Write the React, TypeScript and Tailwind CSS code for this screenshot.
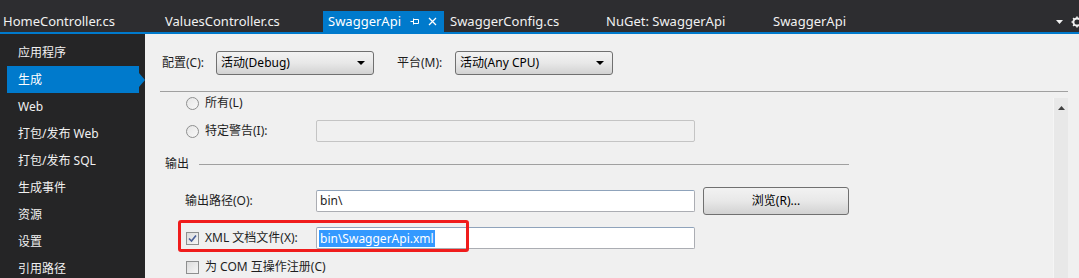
import React from 'react';

const font = { fontFamily: '"Noto Sans", "Noto Sans CJK SC", sans-serif' };

const tabs = [
  { label: 'HomeController.cs', cls: 'w-[160px] pl-[3px]' },
  { label: 'ValuesController.cs', cls: 'w-[163px] pl-[5px]' },
  { label: 'SwaggerApi', cls: 'w-[121px] pl-[5px]', active: true },
  { label: 'SwaggerConfig.cs', cls: 'w-[157px] pl-[6px]' },
  { label: 'NuGet: SwaggerApi', cls: 'w-[167px] pl-[5px]' },
  { label: 'SwaggerApi', cls: 'w-[160px] pl-[5px]' },
];

const navItems = ['应用程序', '生成', 'Web', '打包/发布 Web', '打包/发布 SQL', '生成事件', '资源', '设置', '引用路径'];

const Radio = () => (
  <span className="w-[13px] h-[13px] rounded-full border border-[#8e8f8f] bg-gradient-to-br from-[#e6e6e6] to-[#f8f8f8] shrink-0" />
);

const Checkbox = ({ checked = false }: { checked?: boolean }) => (
  <span className="w-[13px] h-[13px] border border-[#8e8f8f] bg-gradient-to-br from-[#dcdcdc] to-[#f6f6f6] shrink-0 flex items-center justify-center">
    {checked && (
      <svg width="9" height="9" viewBox="0 0 9 9">
        <path d="M1 4.5 L3.5 7 L8 1.5" fill="none" stroke="#4a5f97" strokeWidth="1.6" />
      </svg>
    )}
  </span>
);

const Combo = ({ text }: { text: string }) => (
  <div className="w-[158px] h-[24px] border border-[#707070] rounded-[3px] bg-gradient-to-b from-[#f2f2f2] via-[#e8e8e8] to-[#d2d2d2] flex items-center pl-[4px] pr-[8px] text-[12px] text-black">
    <span className="flex-1">{text}</span>
    <svg width="8" height="4" viewBox="0 0 8 4">
      <path d="M0 0 H8 L4 4 Z" fill="#000" />
    </svg>
  </div>
);

export default function App() {
  return (
    <div className="w-[1079px] h-[278px] overflow-hidden flex flex-col bg-[#f0f0f0]" style={font}>
      {/* document tab well */}
      <div className="h-[34px] shrink-0 bg-[#2d2d30] border-b-2 border-[#007acc] flex items-end text-[13px] text-[#f1f1f1]">
        {tabs.map((t, i) => (
          <div
            key={i}
            className={`${t.cls} h-[21px] flex items-center shrink-0 ${t.active ? 'bg-[#007acc] text-white' : ''}`}
          >
            <span className="leading-none">{t.label}</span>
            {t.active && (
              <div className="ml-auto mr-[7px] flex items-center gap-[9px]">
                <svg width="9" height="7" viewBox="0 0 9 7">
                  <path d="M0.5 3.5 H3.5 M3.5 0.5 V6.5 M3.5 1.5 H8.5 V5.5 H3.5" fill="none" stroke="#fff" strokeWidth="1" />
                </svg>
                <svg width="9" height="9" viewBox="0 0 9 9">
                  <path d="M1 1 L8 8 M8 1 L1 8" stroke="#fff" strokeWidth="1.3" />
                </svg>
              </div>
            )}
          </div>
        ))}
        <div className="flex-1" />
        <div className="h-[21px] flex items-center gap-[8px] mr-[-4px]">
          <svg width="7" height="4" viewBox="0 0 7 4">
            <path d="M0 0 H7 L3.5 4 Z" fill="#f1f1f1" />
          </svg>
          <svg width="12" height="12" viewBox="0 0 12 12">
            <circle cx="6" cy="6" r="3.6" fill="none" stroke="#f1f1f1" strokeWidth="2" />
            <path d="M6 0.5 V2.5 M6 9.5 V11.5 M0.5 6 H2.5 M9.5 6 H11.5 M2.1 2.1 L3.5 3.5 M8.5 8.5 L9.9 9.9 M9.9 2.1 L8.5 3.5 M3.5 8.5 L2.1 9.9" stroke="#f1f1f1" strokeWidth="1.6" />
          </svg>
        </div>
      </div>

      <div className="flex-1 flex min-h-0">
        {/* property page nav */}
        <div className="w-[145px] shrink-0 bg-[#252526] pt-[5px] text-[12px] text-[#f1f1f1]">
          {navItems.map((n) => {
            const active = n === '生成';
            return (
              <div key={n} className="h-[27px] flex items-center">
                <div className={`ml-[7px] w-[132px] h-[27px] pl-[11px] flex items-center ${active ? 'bg-[#007acc] text-white' : ''}`}>
                  <span className="leading-none">{n}</span>
                </div>
                {active && (
                  <svg width="6" height="14" viewBox="0 0 6 14">
                    <path d="M0 0 L6 7 L0 14 Z" fill="#007acc" />
                  </svg>
                )}
              </div>
            );
          })}
        </div>

        {/* property page body */}
        <div className="flex-1 flex flex-col text-[12px] text-[#1e1e1e]">
          <div className="h-[57px] shrink-0 flex items-start pt-[17px] pl-[17px]">
            <div className="flex items-center">
              <span className="leading-none w-[54px]">配置(C):</span>
              <Combo text="活动(Debug)" />
            </div>
            <div className="flex items-center ml-[23px]">
              <span className="leading-none w-[58px]">平台(M):</span>
              <Combo text="活动(Any CPU)" />
            </div>
          </div>
          <div className="ml-[15px] mr-[11px] border-t border-[#a0a0a0]" />

          <div className="flex-1 flex pr-[11px] min-h-0">
            <div className="flex-1 flex flex-col">
              <div className="h-[22px] shrink-0 flex items-center pl-[41px] gap-[6px]">
                <Radio />
                <span className="leading-none">所有(L)</span>
              </div>
              <div className="h-[34px] shrink-0 flex items-center pl-[41px]">
                <Radio />
                <span className="leading-none ml-[6px] w-[111px]">特定警告(I):</span>
                <div className="w-[379px] h-[22px] border border-[#c4c4c4] rounded-[2px] bg-[#f0f0f0]" />
              </div>
              <div className="h-[32px] shrink-0 flex items-center pl-[20px]">
                <span className="leading-none">输出</span>
                <div className="ml-[10px] w-[650px] border-t border-[#a0a0a0]" />
              </div>
              <div className="h-[42px] shrink-0 flex items-center pl-[40px]">
                <span className="leading-none w-[131px]">输出路径(O):</span>
                <div className="w-[379px] h-[22px] border border-[#abadb3] border-t-[#8fa3bb] rounded-[2px] bg-white flex items-center pl-[3px]">
                  <span className="leading-none">bin\</span>
                </div>
                <button className="ml-[8px] w-[146px] h-[28px] border border-[#707070] rounded-[3px] bg-gradient-to-b from-[#f2f2f2] via-[#e8e8e8] to-[#d2d2d2] text-[12px] text-black">
                  浏览(R)...
                </button>
              </div>
              <div className="relative h-[32px] shrink-0 flex items-center pl-[41px]">
                <Checkbox checked />
                <span className="leading-none ml-[6px] w-[111px]">XML 文档文件(X):</span>
                <div className="w-[379px] h-[22px] border border-[#abadb3] border-t-[#8fa3bb] rounded-[2px] bg-white flex items-center pl-[2px]">
                  <span className="leading-[17px] bg-[#3399ff] text-white px-[1px]">bin\SwaggerApi.xml</span>
                </div>
                <div className="absolute left-[33px] top-[-2px] w-[291px] h-[32px] border-[3px] border-[#f01c1c] rounded-[3px]" />
              </div>
              <div className="h-[26px] shrink-0 flex items-center pl-[41px] gap-[6px]">
                <Checkbox />
                <span className="leading-none">为 COM 互操作注册(C)</span>
              </div>
            </div>
            <div className="w-[15px] mt-[6px] bg-[#e8e8e8] border-l border-[#f5f5f5] flex justify-center pt-[8px]">
              <svg width="7" height="4" viewBox="0 0 7 4">
                <path d="M3.5 0 L7 4 H0 Z" fill="#404040" />
              </svg>
            </div>
          </div>
        </div>
      </div>
    </div>
  );
}
